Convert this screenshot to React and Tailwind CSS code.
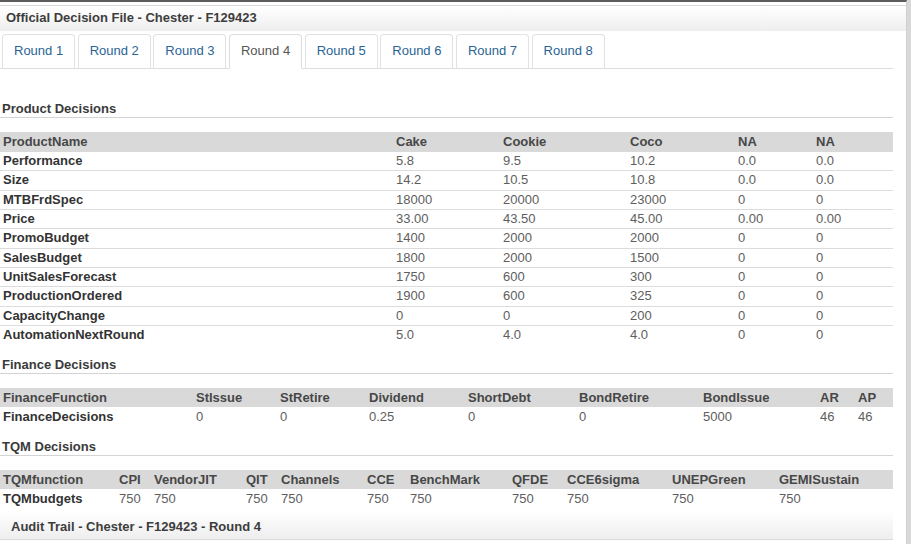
import React from 'react'

const rounds = [1, 2, 3, 4, 5, 6, 7, 8]

const product = {
  cols: ['w-[393px]', 'w-[107px]', 'w-[127px]', 'w-[108px]', 'w-[78px]', 'w-auto'],
  head: ['ProductName', 'Cake', 'Cookie', 'Coco', 'NA', 'NA'],
  rows: [
    ['Performance', '5.8', '9.5', '10.2', '0.0', '0.0'],
    ['Size', '14.2', '10.5', '10.8', '0.0', '0.0'],
    ['MTBFrdSpec', '18000', '20000', '23000', '0', '0'],
    ['Price', '33.00', '43.50', '45.00', '0.00', '0.00'],
    ['PromoBudget', '1400', '2000', '2000', '0', '0'],
    ['SalesBudget', '1800', '2000', '1500', '0', '0'],
    ['UnitSalesForecast', '1750', '600', '300', '0', '0'],
    ['ProductionOrdered', '1900', '600', '325', '0', '0'],
    ['CapacityChange', '0', '0', '200', '0', '0'],
    ['AutomationNextRound', '5.0', '4.0', '4.0', '0', '0'],
  ],
}

const finance = {
  cols: ['w-[193px]', 'w-[84px]', 'w-[89px]', 'w-[99px]', 'w-[111px]', 'w-[124px]', 'w-[117px]', 'w-[38px]', 'w-auto'],
  head: ['FinanceFunction', 'StIssue', 'StRetire', 'Dividend', 'ShortDebt', 'BondRetire', 'BondIssue', 'AR', 'AP'],
  rows: [['FinanceDecisions', '0', '0', '0.25', '0', '0', '5000', '46', '46']],
}

const tqm = {
  cols: ['w-[116px]', 'w-[35px]', 'w-[92px]', 'w-[35px]', 'w-[86px]', 'w-[43px]', 'w-[102px]', 'w-[55px]', 'w-[105px]', 'w-[107px]', 'w-auto'],
  head: ['TQMfunction', 'CPI', 'VendorJIT', 'QIT', 'Channels', 'CCE', 'BenchMark', 'QFDE', 'CCE6sigma', 'UNEPGreen', 'GEMISustain'],
  rows: [['TQMbudgets', '750', '750', '750', '750', '750', '750', '750', '750', '750', '750']],
}

function SectionTitle({ children, first }) {
  return (
    <h3
      className={`${first ? 'mt-[32px]' : 'mt-[12px]'} mb-[14px] border-b border-[#d4d4d4] pl-[2px] text-[13px] font-bold leading-[16px] text-[#3a3a3a]`}>
      {children}
    </h3>
  )
}

function DecisionTable({ data }) {
  return (
    <table className="w-[893px] table-fixed border-collapse">
      <colgroup>
        {data.cols.map((c, i) => (
          <col key={i} className={c} />
        ))}
      </colgroup>
      <thead>
        <tr className="bg-[#d9d9d9]">
          {data.head.map((h, i) => (
            <th
              key={i}
              className="h-[19.5px] whitespace-nowrap p-0 pl-[3px] text-left font-bold leading-[19px] text-[#474747]">
              {h}
            </th>
          ))}
        </tr>
      </thead>
      <tbody>
        {data.rows.map((row, r) => (
          <tr key={r} className={r > 0 ? 'border-t border-[#dcdcdc]' : ''}>
            {row.map((cell, i) =>
              i === 0 ? (
                <th
                  key={i}
                  className="h-[19.33px] whitespace-nowrap p-0 pl-[3px] text-left font-bold leading-[18px] text-[#333]">
                  {cell}
                </th>
              ) : (
                <td
                  key={i}
                  className="h-[19.33px] whitespace-nowrap p-0 pl-[3px] leading-[18px] text-[#5e5e5e]">
                  {cell}
                </td>
              ),
            )}
          </tr>
        ))}
      </tbody>
    </table>
  )
}

export default function App() {
  return (
    <div className="flex h-[544px] w-[911px] overflow-hidden bg-white font-['Liberation_Sans',Arial,sans-serif] text-[13px]">
      <div className="w-[907px] border-t-2 border-r border-t-[#5c5c5c] border-r-[#d0d0d0]">
        <div className="mt-[3px] h-[26px] border-t border-[#dadada] bg-gradient-to-b from-white to-[#eeeeee] pl-[6px] font-bold leading-[24px] text-[#3d3d3d]">
          Official Decision File - Chester - F129423
        </div>

        <div className="w-[893px]">
          <ul className="mt-[3px] flex gap-[2.5px] border-b border-[#dddddd] pl-[2px]">
            {rounds.map(n => (
              <li
                key={n}
                className={`-mb-px h-[35px] rounded-t-[4px] border px-[11px] leading-[32px] ${
                  n === 4
                    ? 'border-[#dddddd] border-b-white bg-white text-[#555]'
                    : 'border-[#e2e2e2] border-b-[#dddddd] text-[#2a6496]'
                }`}>
                Round {n}
              </li>
            ))}
          </ul>

          <SectionTitle first>Product Decisions</SectionTitle>
          <DecisionTable data={product} />

          <SectionTitle>Finance Decisions</SectionTitle>
          <DecisionTable data={finance} />

          <SectionTitle>TQM Decisions</SectionTitle>
          <DecisionTable data={tqm} />

          <div className="mt-[3px] h-[29px] border-b border-[#dadada] bg-gradient-to-b from-white to-[#eeeeee] pl-[11px] pt-[8px] font-bold leading-[16px] text-[#3d3d3d]">
            Audit Trail - Chester - F129423 - Round 4
          </div>
        </div>
      </div>
      <div className="w-[4px] bg-[#d8d8d8]" />
    </div>
  )
}
